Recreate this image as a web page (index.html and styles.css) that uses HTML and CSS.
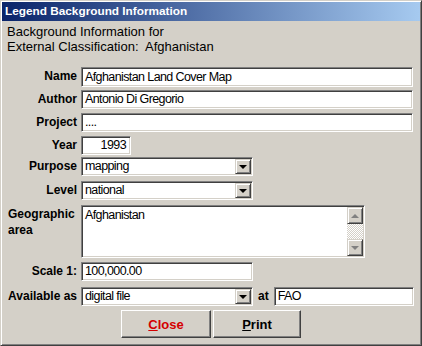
FILE: index.html
```html
<!DOCTYPE html>
<html lang="en">
<head>
    <meta charset="UTF-8">
    <title>Legend Background Information</title>
    <link rel="stylesheet" href="styles.css">
</head>
<body>

    <div class="window">
        <div class="title-bar">Legend Background Information</div>

        <div class="intro">
            Background Information for<br>
            External Classification:&nbsp; Afghanistan
        </div>

        <div class="form">
            <label class="label">Name</label>
            <div class="cell"><div class="field wide name">Afghanistan Land Cover Map</div></div>

            <label class="label">Author</label>
            <div class="cell"><div class="field wide">Antonio Di Gregorio</div></div>

            <label class="label">Project</label>
            <div class="cell"><div class="field wide">....</div></div>

            <label class="label">Year</label>
            <div class="cell"><div class="field year">1993</div></div>

            <label class="label">Purpose</label>
            <div class="cell">
                <div class="field combo">
                    <span class="combo-text">mapping</span>
                    <span class="combo-btn"><span class="arrow-down"></span></span>
                </div>
            </div>

            <label class="label">Level</label>
            <div class="cell">
                <div class="field combo">
                    <span class="combo-text">national</span>
                    <span class="combo-btn"><span class="arrow-down"></span></span>
                </div>
            </div>

            <label class="label label-top">Geographic<br>area</label>
            <div class="cell">
                <div class="field memo">
                    <div class="memo-text">Afghanistan</div>
                    <div class="scrollbar">
                        <span class="scroll-btn"><span class="arrow-up grey"></span></span>
                        <span class="scroll-track"></span>
                        <span class="scroll-btn"><span class="arrow-down grey"></span></span>
                    </div>
                </div>
            </div>

            <label class="label">Scale 1:</label>
            <div class="cell"><div class="field medium">100,000.00</div></div>

            <label class="label">Available as</label>
            <div class="cell">
                <div class="field combo">
                    <span class="combo-text">digital file</span>
                    <span class="combo-btn"><span class="arrow-down"></span></span>
                </div>
                <span class="at-label">at</span>
                <div class="field at-field">FAO</div>
            </div>
        </div>

        <div class="buttons">
            <button class="btn btn-close"><u>C</u>lose</button>
            <button class="btn btn-print"><u>P</u>rint</button>
        </div>
    </div>

</body>
</html>
```

FILE: styles.css
```css
* {
    margin: 0;
    padding: 0;
    box-sizing: border-box;
}

body {
    font-family: 'Liberation Sans', Arial, sans-serif;
    font-size: 12px;
    color: #000;
    background-color: #d4d0c8;
}

.window {
    width: 422px;
    height: 346px;
    background-color: #d4d0c8;
    border: 1px solid;
    border-color: #d4d0c8 #404040 #404040 #d4d0c8;
    box-shadow: inset 1px 1px #fff, inset -1px -1px #808080;
    padding: 1px;
}

.title-bar {
    height: 19px;
    line-height: 19px;
    padding-left: 3px;
    color: #fff;
    font-weight: bold;
    font-size: 11.8px;
    background: linear-gradient(to right, #0a246a, #a6caf0);
}

.intro {
    margin: 3px 0 0 5px;
    font-size: 13px;
    line-height: 15px;
}

.form {
    display: grid;
    grid-template-columns: 79px 1fr;
    grid-template-rows: 23px 23px 23px 21px 24px 24px 57px 25px 23px;
    margin-top: 13px;
}

.label {
    font-weight: bold;
    text-align: right;
    padding-right: 4px;
    line-height: 19px;
}

.label-top {
    text-align: left;
    padding: 1px 0 0 6px;
    line-height: 16px;
}

.cell {
    display: flex;
    align-items: flex-start;
}

/* sunken edit box, win classic style - old font was narrow so squeeze a bit */
.field {
    height: 19px;
    line-height: 17px;
    padding: 0 2px 0 3px;
    font-size: 12.5px;
    letter-spacing: -0.6px;
    background-color: #fff;
    border: 1px solid;
    border-color: #808080 #fff #fff #808080;
    box-shadow: inset 1px 1px #404040, inset -1px -1px #d4d0c8;
    white-space: nowrap;
    overflow: hidden;
}

.wide {
    width: 332px;
}

.name {
    height: 20px;
    line-height: 18px;
}

.year {
    width: 50px;
    text-align: right;
    padding-right: 4px;
}

.medium {
    width: 172px;
}

.combo {
    width: 172px;
    display: flex;
    align-items: center;
    padding-right: 1px;
}

.combo-text {
    flex: 1;
}

.combo-btn,
.scroll-btn {
    width: 16px;
    height: 17px;
    display: flex;
    align-items: center;
    justify-content: center;
    background-color: #d4d0c8;
    border: 1px solid;
    border-color: #d4d0c8 #404040 #404040 #d4d0c8;
    box-shadow: inset 1px 1px #fff, inset -1px -1px #808080;
}

.combo-btn {
    height: 15px;
}

.arrow-down,
.arrow-up {
    width: 0;
    height: 0;
    border-left: 4px solid transparent;
    border-right: 4px solid transparent;
}

.arrow-down {
    border-top: 4px solid #000;
}

.arrow-up {
    border-bottom: 4px solid #000;
}

.arrow-down.grey {
    border-top-color: #808080;
}

.arrow-up.grey {
    border-bottom-color: #808080;
}

.memo {
    width: 284px;
    height: 53px;
    display: flex;
    align-items: stretch;
    padding: 2px 2px 2px 3px;
}

.memo-text {
    flex: 1;
    line-height: 14px;
}

.scrollbar {
    width: 16px;
    display: flex;
    flex-direction: column;
    margin: -1px -1px -1px 0;
}

.scroll-btn {
    height: 17px;
}

.scroll-track {
    flex: 1;
    background-image: repeating-conic-gradient(#fff 0 25%, #d4d0c8 0 50%);
    background-size: 2px 2px;
}

.at-label {
    font-weight: bold;
    margin: 0 5px 0 5px;
    line-height: 19px;
}

.at-field {
    width: 140px;
}

.buttons {
    display: flex;
    justify-content: center;
    gap: 2px;
}

.btn {
    height: 28px;
    font-family: 'Liberation Sans', Arial, sans-serif;
    font-size: 13px;
    font-weight: bold;
    background-color: #d4d0c8;
    border: 1px solid;
    border-color: #fff #404040 #404040 #fff;
    box-shadow: inset -1px -1px #808080;
}

.btn-close {
    width: 90px;
    color: #d40000;
}

.btn-print {
    width: 88px;
    color: #000;
}
```
